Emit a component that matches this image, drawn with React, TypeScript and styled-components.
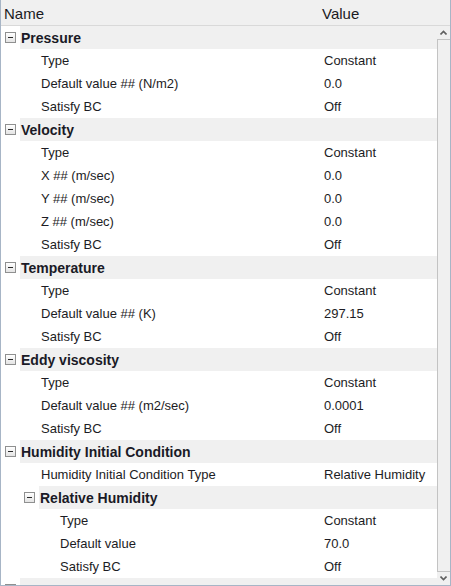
import styled, { createGlobalStyle } from "styled-components";

const GlobalStyle = createGlobalStyle`
  html, body {
    margin: 0;
    padding: 0;
    background: #ffffff;
  }
  body {
    font-family: "Liberation Sans", Arial, sans-serif;
    color: #1c1c24;
  }
`;

type Item =
  | { kind: "group"; label: string; depth: number }
  | { kind: "prop"; label: string; value: string; depth: number };

// last group is scrolled off below the edge, only its band shows
const items: Item[] = [
  { kind: "group", label: "Pressure", depth: 0 },
  { kind: "prop", label: "Type", value: "Constant", depth: 2 },
  { kind: "prop", label: "Default value ## (N/m2)", value: "0.0", depth: 2 },
  { kind: "prop", label: "Satisfy BC", value: "Off", depth: 2 },
  { kind: "group", label: "Velocity", depth: 0 },
  { kind: "prop", label: "Type", value: "Constant", depth: 2 },
  { kind: "prop", label: "X ## (m/sec)", value: "0.0", depth: 2 },
  { kind: "prop", label: "Y ## (m/sec)", value: "0.0", depth: 2 },
  { kind: "prop", label: "Z ## (m/sec)", value: "0.0", depth: 2 },
  { kind: "prop", label: "Satisfy BC", value: "Off", depth: 2 },
  { kind: "group", label: "Temperature", depth: 0 },
  { kind: "prop", label: "Type", value: "Constant", depth: 2 },
  { kind: "prop", label: "Default value ## (K)", value: "297.15", depth: 2 },
  { kind: "prop", label: "Satisfy BC", value: "Off", depth: 2 },
  { kind: "group", label: "Eddy viscosity", depth: 0 },
  { kind: "prop", label: "Type", value: "Constant", depth: 2 },
  { kind: "prop", label: "Default value ## (m2/sec)", value: "0.0001", depth: 2 },
  { kind: "prop", label: "Satisfy BC", value: "Off", depth: 2 },
  { kind: "group", label: "Humidity Initial Condition", depth: 0 },
  { kind: "prop", label: "Humidity Initial Condition Type", value: "Relative Humidity", depth: 2 },
  { kind: "group", label: "Relative Humidity", depth: 1 },
  { kind: "prop", label: "Type", value: "Constant", depth: 3 },
  { kind: "prop", label: "Default value", value: "70.0", depth: 3 },
  { kind: "prop", label: "Satisfy BC", value: "Off", depth: 3 },
  { kind: "group", label: "", depth: 0 },
];

const Window = styled.div`
  width: 451px;
  height: 586px;
  box-sizing: border-box;
  border: 1px solid #a7b5c6;
  border-top: none;
  display: flex;
  flex-direction: column;
  overflow: hidden;
  background: #ffffff;
`;

const Header = styled.div`
  height: 26px;
  flex: none;
  box-sizing: border-box;
  display: grid;
  grid-template-columns: 320px 1fr;
  align-items: center;
  background: #f0f0f0;
  border-bottom: 1px solid #d9d9d9;
  font-size: 15px;
  color: #1a1a22;
`;

const HeaderCell = styled.div<{ $pad: number }>`
  padding-left: ${(p) => p.$pad}px;
  padding-top: 1px;
`;

const Body = styled.div`
  flex: 1;
  display: flex;
  min-height: 0;
`;

const List = styled.div`
  flex: 1;
  overflow: hidden;
`;

const GroupRow = styled.div`
  height: 23px;
  display: flex;
`;

const ExpanderCell = styled.div<{ $depth: number }>`
  width: ${(p) => 19 * (p.$depth + 1)}px;
  flex: none;
  display: flex;
  align-items: center;
  justify-content: flex-end;
  padding-right: 4px;
  box-sizing: border-box;
`;

const ExpanderBox = styled.span`
  width: 11px;
  height: 11px;
  box-sizing: border-box;
  border: 1px solid #8f9090;
  background: linear-gradient(#ffffff, #e4e4e4);
  display: flex;
  align-items: center;
  justify-content: center;

  &::after {
    content: "";
    width: 5px;
    height: 1px;
    background: #2a2a2a;
  }
`;

const GroupBand = styled.div`
  flex: 1;
  background: #f0f0f0;
  display: flex;
  align-items: center;
  padding-left: 1px;
  font-size: 14px;
  font-weight: 700;
  color: #1a1a26;
`;

const PropRow = styled.div`
  height: 23px;
  display: grid;
  grid-template-columns: 322px 1fr;
  align-items: center;
  font-size: 13px;
  white-space: nowrap;
`;

const NameCell = styled.div<{ $depth: number }>`
  padding-left: ${(p) => 19 * p.$depth + 2}px;
`;

const ValueCell = styled.div`
  padding-left: 1px;
`;

const Scrollbar = styled.div`
  width: 13px;
  flex: none;
  background: #f0f0f0;
  display: flex;
  flex-direction: column;
`;

const ArrowButton = styled.div`
  height: 13px;
  flex: none;
  display: flex;
  align-items: center;
  justify-content: center;
`;

const Thumb = styled.div`
  flex: 1;
  box-sizing: border-box;
  border: 1px solid #c3c3c3;
  border-right: none;
  background: #f0f0f0;
`;

const Chevron = ({ up }: { up: boolean }) => (
  <svg width="7" height="5" viewBox="0 0 7 5">
    <path
      d={up ? "M0.5 4.5 L3.5 1.5 L6.5 4.5" : "M0.5 0.5 L3.5 3.5 L6.5 0.5"}
      fill="none"
      stroke="#5f5f5f"
      strokeWidth="1.6"
    />
  </svg>
);

export default function App() {
  return (
    <>
      <GlobalStyle />
      <Window>
        <Header>
          <HeaderCell $pad={3}>Name</HeaderCell>
          <HeaderCell $pad={1}>Value</HeaderCell>
        </Header>
        <Body>
          <List>
            {items.map((it, i) =>
              it.kind === "group" ? (
                <GroupRow key={i}>
                  <ExpanderCell $depth={it.depth}>
                    <ExpanderBox />
                  </ExpanderCell>
                  <GroupBand>{it.label}</GroupBand>
                </GroupRow>
              ) : (
                <PropRow key={i}>
                  <NameCell $depth={it.depth}>{it.label}</NameCell>
                  <ValueCell>{it.value}</ValueCell>
                </PropRow>
              )
            )}
          </List>
          <Scrollbar>
            <ArrowButton>
              <Chevron up />
            </ArrowButton>
            <Thumb />
            <ArrowButton>
              <Chevron up={false} />
            </ArrowButton>
          </Scrollbar>
        </Body>
      </Window>
    </>
  );
}
